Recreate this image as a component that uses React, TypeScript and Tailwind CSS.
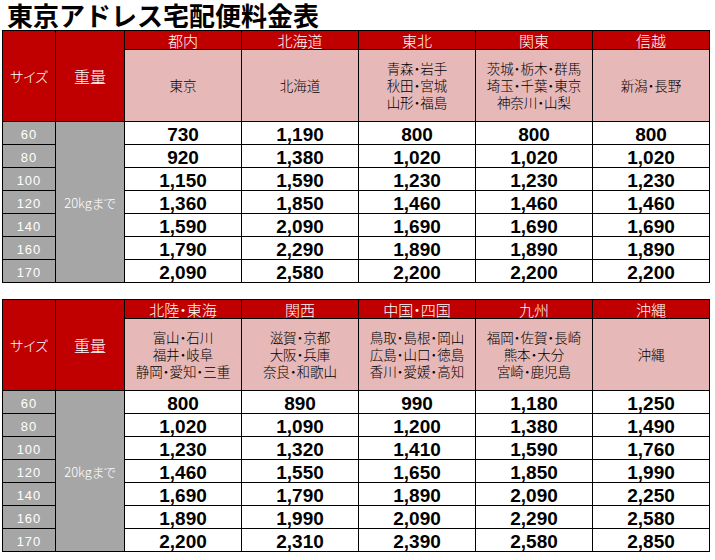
const SIZES = ['60', '80', '100', '120', '140', '160', '170'];

type Region = {
  name: string;
  areas: string[];
  prices: string[];
};

const TABLES: Region[][] = [
  [
    { name: '都内', areas: ['東京'], prices: ['730', '920', '1,150', '1,360', '1,590', '1,790', '2,090'] },
    { name: '北海道', areas: ['北海道'], prices: ['1,190', '1,380', '1,590', '1,850', '2,090', '2,290', '2,580'] },
    {
      name: '東北',
      areas: ['青森・岩手', '秋田・宮城', '山形・福島'],
      prices: ['800', '1,020', '1,230', '1,460', '1,690', '1,890', '2,200'],
    },
    {
      name: '関東',
      areas: ['茨城・栃木・群馬', '埼玉・千葉・東京', '神奈川・山梨'],
      prices: ['800', '1,020', '1,230', '1,460', '1,690', '1,890', '2,200'],
    },
    { name: '信越', areas: ['新潟・長野'], prices: ['800', '1,020', '1,230', '1,460', '1,690', '1,890', '2,200'] },
  ],
  [
    {
      name: '北陸・東海',
      areas: ['富山・石川', '福井・岐阜', '静岡・愛知・三重'],
      prices: ['800', '1,020', '1,230', '1,460', '1,690', '1,890', '2,200'],
    },
    {
      name: '関西',
      areas: ['滋賀・京都', '大阪・兵庫', '奈良・和歌山'],
      prices: ['890', '1,090', '1,320', '1,550', '1,790', '1,990', '2,310'],
    },
    {
      name: '中国・四国',
      areas: ['鳥取・島根・岡山', '広島・山口・徳島', '香川・愛媛・高知'],
      prices: ['990', '1,200', '1,410', '1,650', '1,890', '2,090', '2,390'],
    },
    {
      name: '九州',
      areas: ['福岡・佐賀・長崎', '熊本・大分', '宮崎・鹿児島'],
      prices: ['1,180', '1,380', '1,590', '1,850', '2,090', '2,290', '2,580'],
    },
    { name: '沖縄', areas: ['沖縄'], prices: ['1,250', '1,490', '1,760', '1,990', '2,250', '2,580', '2,850'] },
  ],
];

const CJK = "font-['Noto_Sans_CJK_JP',sans-serif]";
const JP = `${CJK} font-light [font-feature-settings:'palt']`;

function RateTable({ regions }: { regions: Region[] }) {
  return (
    <div className="ml-[2px] grid w-max grid-cols-[52px_68px_116px_116px_116px_116px_116px] grid-rows-[18px_71px_repeat(7,22px)] gap-px bg-black p-px">
      {/* Header */}
      <div className={`row-span-2 flex items-center justify-center bg-[#c00000] text-[14px] leading-none text-white ${JP}`}>
        サイズ
      </div>
      <div className={`row-span-2 flex items-center justify-center bg-[#c00000] text-[16px] leading-none text-white ${JP}`}>
        重量
      </div>
      {regions.map((r) => (
        <div
          key={r.name}
          className={`flex items-center justify-center bg-[#c00000] text-[15px] leading-none text-white ${JP}`}
        >
          {r.name}
        </div>
      ))}
      {regions.map((r) => (
        <div
          key={r.name + '-areas'}
          className={`flex flex-col items-center justify-center bg-[#e6b8b7] text-[13.5px] leading-[17px] text-black ${JP}`}
        >
          {r.areas.map((a) => (
            <span key={a}>{a}</span>
          ))}
        </div>
      ))}

      {/* Price rows */}
      {SIZES.map((size, i) => (
        <div key={size} className="contents">
          <div className="flex items-end justify-center bg-[#a6a6a6] pb-px font-['Liberation_Sans',sans-serif] text-[13px] leading-[16px] tracking-[1px] text-white">
            {size}
          </div>
          {i === 0 && (
            <div className={`row-span-7 flex items-center justify-center bg-[#a6a6a6] text-[13px] leading-none text-white ${JP}`}>
              20kgまで
            </div>
          )}
          {regions.map((r) => (
            <div
              key={r.name + size}
              className="flex items-end justify-center bg-white font-['Liberation_Sans',sans-serif] text-[19px] font-bold leading-[19px] text-black"
            >
              {r.prices[i]}
            </div>
          ))}
        </div>
      ))}
    </div>
  );
}

export default function App() {
  return (
    <div className="min-h-[560px] w-[715px] bg-white">
      <h1 className={`pl-[7px] text-[26px] font-bold leading-[30px] text-black ${CJK}`}>
        東京アドレス宅配便料金表
      </h1>
      <div className="flex flex-col gap-4">
        {TABLES.map((t, i) => (
          <RateTable key={i} regions={t} />
        ))}
      </div>
    </div>
  );
}
